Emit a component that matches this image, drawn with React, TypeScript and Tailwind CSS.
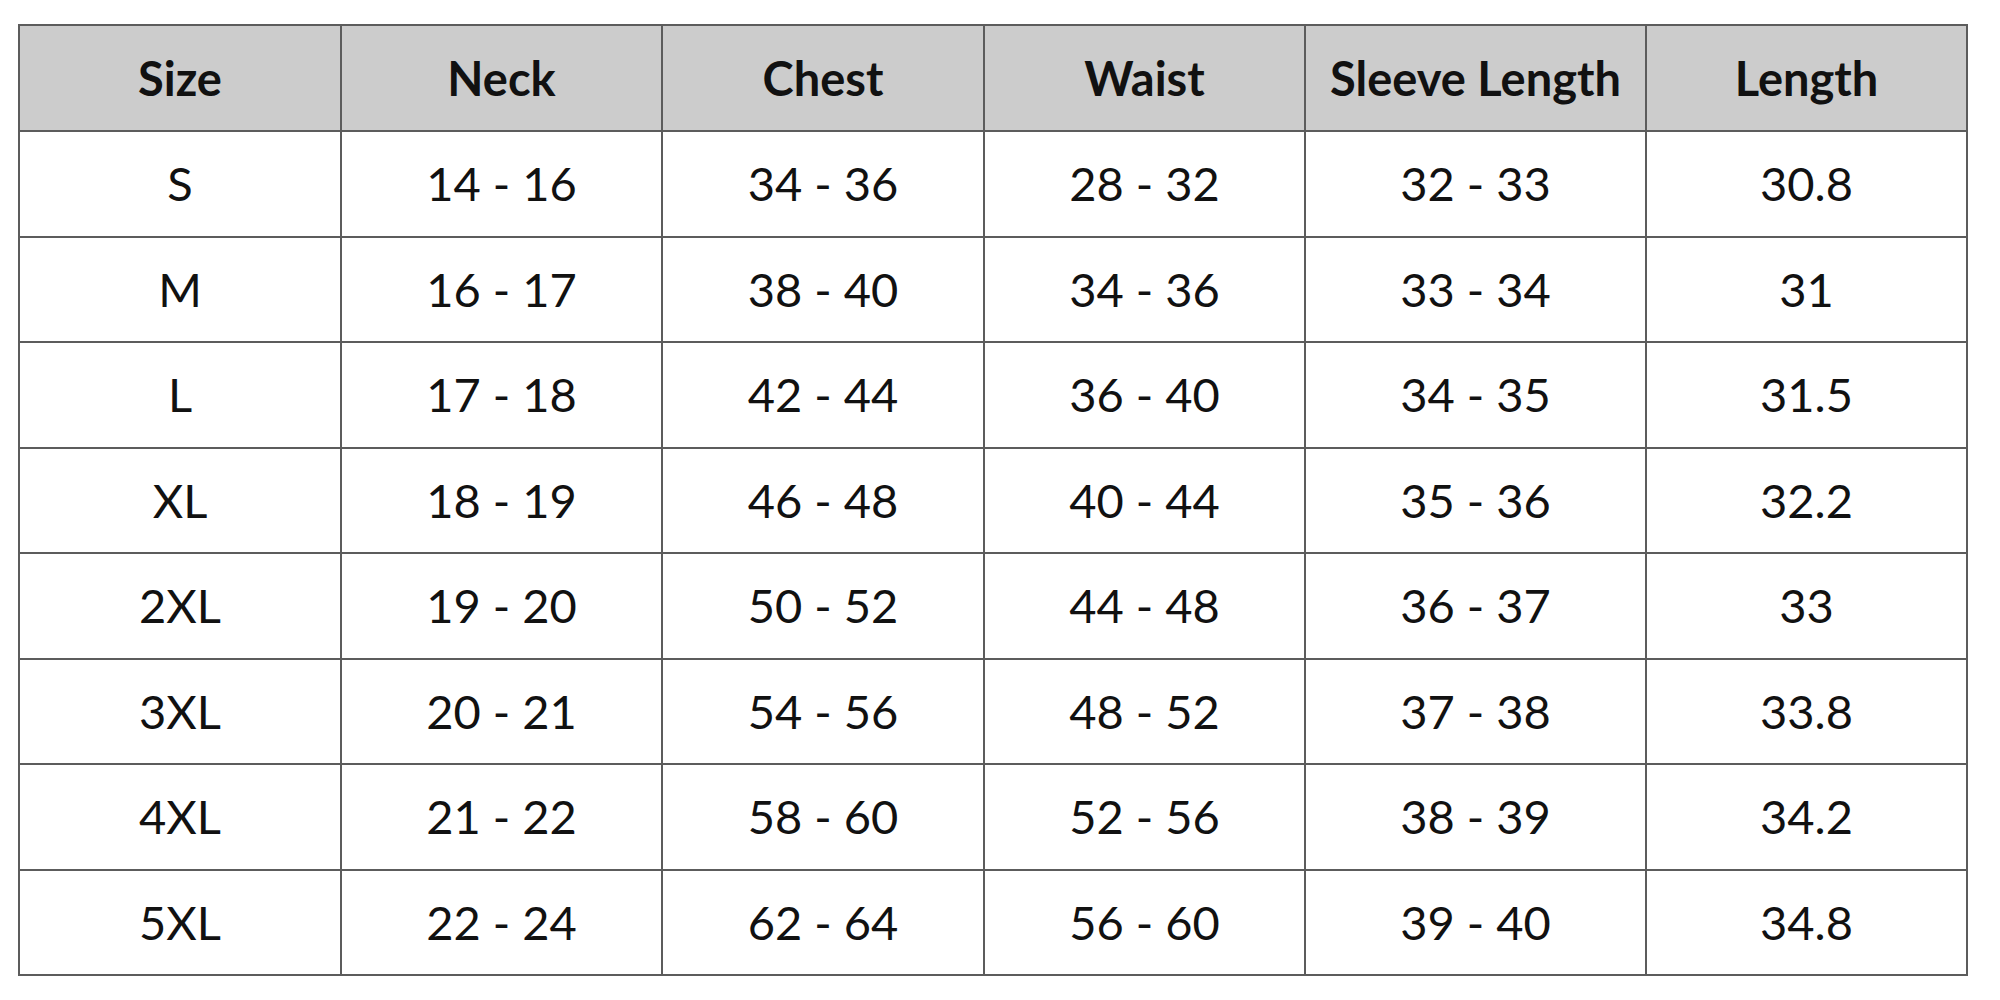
import React from "react";

const headers = ["Size", "Neck", "Chest", "Waist", "Sleeve Length", "Length"];
const rows = [
  ["S", "14 - 16", "34 - 36", "28 - 32", "32 - 33", "30.8"],
  ["M", "16 - 17", "38 - 40", "34 - 36", "33 - 34", "31"],
  ["L", "17 - 18", "42 - 44", "36 - 40", "34 - 35", "31.5"],
  ["XL", "18 - 19", "46 - 48", "40 - 44", "35 - 36", "32.2"],
  ["2XL", "19 - 20", "50 - 52", "44 - 48", "36 - 37", "33"],
  ["3XL", "20 - 21", "54 - 56", "48 - 52", "37 - 38", "33.8"],
  ["4XL", "21 - 22", "58 - 60", "52 - 56", "38 - 39", "34.2"],
  ["5XL", "22 - 24", "62 - 64", "56 - 60", "39 - 40", "34.8"],
];

export default function App() {
  return (
    <div className="w-[2000px] h-[1000px] bg-white pt-[24px] pl-[18px] font-['Lato',sans-serif] text-[#111]">
      <table className="table-fixed border-collapse w-[1950px]">
        <colgroup>
          <col className="w-[322px]" />
          <col className="w-[321px]" />
          <col className="w-[322px]" />
          <col className="w-[321px]" />
          <col className="w-[341px]" />
          <col className="w-[321px]" />
        </colgroup>
        <thead>
          <tr className="h-[106px] bg-[#cccccc]">
            {headers.map((h) => (
              <th
                key={h}
                className="border-2 border-[#5c5c5c] text-center align-middle text-[47px] font-bold leading-none p-0"
              >
                {h}
              </th>
            ))}
          </tr>
        </thead>
        <tbody>
          {rows.map((r) => (
            <tr key={r[0]} className="h-[105.5px]">
              {r.map((c, i) => (
                <td
                  key={i}
                  className="border-2 border-[#5c5c5c] text-center align-middle text-[47px] font-normal leading-none p-0"
                >
                  {c}
                </td>
              ))}
            </tr>
          ))}
        </tbody>
      </table>
    </div>
  );
}
